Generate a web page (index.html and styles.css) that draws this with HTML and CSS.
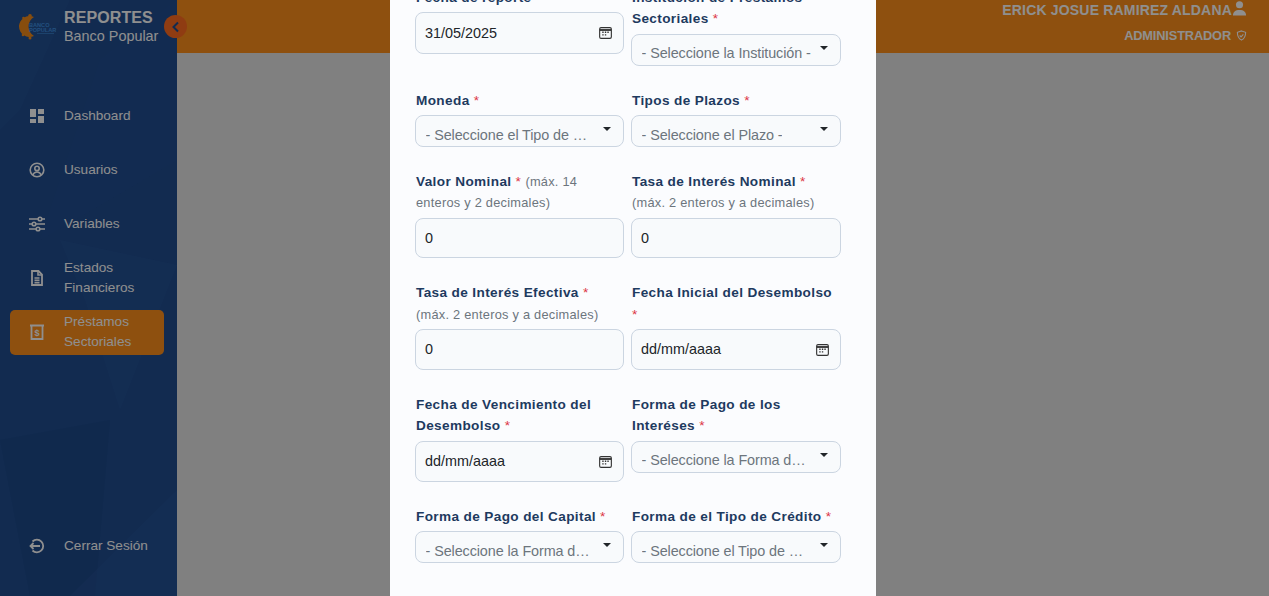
FILE: index.html
```html
<!DOCTYPE html>
<html lang="es">
<head>
  <meta charset="UTF-8" />
  <title>Reportes - Préstamos Sectoriales</title>
  <link rel="stylesheet" href="styles.css">
</head>
<body>
  <aside class="sidebar">
    <svg class="facets" viewBox="0 0 177 596" preserveAspectRatio="none" aria-hidden="true">
      <polygon points="0,0 70,0 20,110 0,130" fill="#3a6ab3" opacity=".1"/>
      <polygon points="60,240 177,265 120,410 85,300" fill="#3a6ab3" opacity=".14"/>
      <polygon points="0,440 110,420 95,596 30,596" fill="#17407d" opacity=".25"/>
      <polygon points="177,490 70,596 177,596" fill="#3a6ab3" opacity=".16"/>
      <polygon points="100,60 177,0 177,160 40,240" fill="#3a6ab3" opacity=".07"/>
    </svg>

    <div class="brand">
      <svg class="logo" viewBox="0 0 38 26" aria-hidden="true">
        <path d="M15 3A10.500 10.500 0 1 0 15 22A11 11 0 0 1 15 3z" fill="#f08a1a"/>
        <circle cx="11" cy="1.800" r="1.800" fill="#f08a1a"/>
        <circle cx="4.500" cy="4" r="1.300" fill="#f08a1a"/>
        <circle cx="1.300" cy="12" r="1.300" fill="#f08a1a"/>
        <circle cx="4" cy="21" r="1.300" fill="#f08a1a"/>
        <circle cx="11" cy="24" r="1.500" fill="#f08a1a"/>
        <text x="10" y="13" class="logo-text">BANCO</text>
        <text x="10" y="17.500" class="logo-text">POPULAR</text>
        <rect x="18" y="19" width="17" height="1" fill="#3f8fe0" opacity=".6"/>
      </svg>
      <div class="brand-text">
        <strong>REPORTES</strong>
        <span>Banco Popular</span>
      </div>
    </div>

    <nav class="menu">
      <a class="menu-item">
        <svg viewBox="0 0 16 16" aria-hidden="true"><path class="solid" d="M1 1h6v8H1zM9 1h6v5H9zM1 11h6v4H1zM9 8h6v7H9z"/></svg>
        <span>Dashboard</span>
      </a>
      <a class="menu-item">
        <svg viewBox="0 0 16 16" aria-hidden="true"><circle class="line" cx="8" cy="8" r="6.800"/><circle class="line" cx="8" cy="6.400" r="2.200"/><path class="line" d="M3.800 13c.8-2 2.400-3 4.200-3s3.400 1 4.200 3"/></svg>
        <span>Usuarios</span>
      </a>
      <a class="menu-item">
        <svg viewBox="0 0 16 16" aria-hidden="true"><path class="line" d="M0 3h9M13 3h3M0 8h3M7 8h9M0 13h7M11 13h5"/><circle class="line" cx="11" cy="3" r="1.800"/><circle class="line" cx="5" cy="8" r="1.800"/><circle class="line" cx="9" cy="13" r="1.800"/></svg>
        <span>Variables</span>
      </a>
      <a class="menu-item">
        <svg viewBox="0 0 16 16" aria-hidden="true"><path class="line thick" d="M3 1h6.500L13 4.500V15H3z"/><path class="line" d="M9 1v4h4M5.500 8h5M5.500 10.300h5M5.500 12.600h5"/></svg>
        <span>Estados<br>Financieros</span>
      </a>
      <a class="menu-item active">
        <svg viewBox="0 0 16 16" aria-hidden="true"><path class="line thick" d="M1 1.500h14M2.500 2v13h11V2"/><text x="8" y="12" class="dollar">$</text></svg>
        <span>Préstamos<br>Sectoriales</span>
      </a>
    </nav>

    <a class="menu-item logout">
      <svg viewBox="0 0 16 16" aria-hidden="true"><path class="line thick" d="M3.500 3.500A6.300 6.300 0 1 1 3.500 12.500"/><path class="line thick" d="M11 8H1.500M4.500 5L1.500 8l3 3"/></svg>
      <span>Cerrar Sesión</span>
    </a>
  </aside>

  <button class="toggle" aria-label="Contraer menú">
    <svg viewBox="0 0 10 12" aria-hidden="true"><path d="M7 1.500L2.500 6 7 10.500"/></svg>
  </button>

  <main class="content">
    <header class="topbar">
      <div class="user-line">
        <span>ERICK JOSUE RAMIREZ ALDANA</span>
        <svg class="user-icon" viewBox="0 0 16 16" aria-hidden="true"><circle cx="8" cy="4" r="3.800"/><path d="M1 15.500c0-4 2.500-6 7-6s7 2 7 6z"/></svg>
      </div>
      <div class="role-line">
        <span>ADMINISTRADOR</span>
        <svg class="shield-icon" viewBox="0 0 12 12" aria-hidden="true"><path d="M6 1l4.500 1.500c0 4-1 6.800-4.500 8.500C2.500 9.300 1.500 6.500 1.500 2.500z"/><path d="M4 6l1.500 1.500L8 4.800"/></svg>
      </div>
    </header>
  </main>

  <div class="backdrop"></div>

  <section class="modal" role="dialog" aria-label="Préstamos sectoriales">
    <form class="form-grid">
      <div class="field">
        <label>Fecha de reporte <em>*</em></label>
        <div class="control tall">
          <span class="value">31/05/2025</span>
          <svg class="calendar" viewBox="0 0 14 14" aria-hidden="true"><rect x=".7" y="1.700" width="12.600" height="11.600" rx="1.500"/><path d="M1 4.300h12" class="band"/><path d="M3.500 6.800h1.500M6.300 6.800h1.500M9 6.800h1.500M3.500 9.500h1.500M6.300 9.500h1.500" class="dots"/></svg>
        </div>
      </div>
      <div class="field">
        <label>Institución de Préstamos Sectoriales <em>*</em></label>
        <div class="control select"><span class="placeholder">- Seleccione la Institución -</span></div>
      </div>

      <div class="field">
        <label>Moneda <em>*</em></label>
        <div class="control select"><span class="placeholder">- Seleccione el Tipo de Moneda -</span></div>
      </div>
      <div class="field">
        <label>Tipos de Plazos <em>*</em></label>
        <div class="control select"><span class="placeholder">- Seleccione el Plazo -</span></div>
      </div>

      <div class="field">
        <label>Valor Nominal <em>*</em> <small>(máx. 14 enteros y 2 decimales)</small></label>
        <div class="control"><span class="value">0</span></div>
      </div>
      <div class="field">
        <label>Tasa de Interés Nominal <em>*</em> <small>(máx. 2 enteros y a decimales)</small></label>
        <div class="control"><span class="value">0</span></div>
      </div>

      <div class="field">
        <label>Tasa de Interés Efectiva <em>*</em> <small>(máx. 2 enteros y a decimales)</small></label>
        <div class="control"><span class="value">0</span></div>
      </div>
      <div class="field">
        <label>Fecha Inicial del Desembolso <em>*</em></label>
        <div class="control">
          <span class="value">dd/mm/aaaa</span>
          <svg class="calendar" viewBox="0 0 14 14" aria-hidden="true"><rect x=".7" y="1.700" width="12.600" height="11.600" rx="1.500"/><path d="M1 4.300h12" class="band"/><path d="M3.500 6.800h1.500M6.300 6.800h1.500M9 6.800h1.500M3.500 9.500h1.500M6.300 9.500h1.500" class="dots"/></svg>
        </div>
      </div>

      <div class="field">
        <label>Fecha de Vencimiento del Desembolso <em>*</em></label>
        <div class="control tall">
          <span class="value">dd/mm/aaaa</span>
          <svg class="calendar" viewBox="0 0 14 14" aria-hidden="true"><rect x=".7" y="1.700" width="12.600" height="11.600" rx="1.500"/><path d="M1 4.300h12" class="band"/><path d="M3.500 6.800h1.500M6.300 6.800h1.500M9 6.800h1.500M3.500 9.500h1.500M6.300 9.500h1.500" class="dots"/></svg>
        </div>
      </div>
      <div class="field">
        <label>Forma de Pago de los Interéses <em>*</em></label>
        <div class="control select"><span class="placeholder">- Seleccione la Forma de Pago -</span></div>
      </div>

      <div class="field">
        <label>Forma de Pago del Capital <em>*</em></label>
        <div class="control select"><span class="placeholder">- Seleccione la Forma de Pago -</span></div>
      </div>
      <div class="field">
        <label>Forma de el Tipo de Crédito <em>*</em></label>
        <div class="control select"><span class="placeholder">- Seleccione el Tipo de Crédito -</span></div>
      </div>
    </form>
  </section>
</body>
</html>
```

FILE: styles.css
```css
/* Reset */
*, *::before, *::after {
  box-sizing: border-box;
}

html, body {
  height: 100%;
}

body {
  margin: 0;
  display: flex;
  overflow: hidden;
  background: #e4e4e4;
  font-family: "Liberation Sans", Arial, sans-serif;
  color: #212529;
}

/* Sidebar */
.sidebar {
  position: relative;
  flex: 0 0 177px;
  display: flex;
  flex-direction: column;
  height: 596px;
  background: #204d8f;
  color: #fff;
  overflow: hidden;
}

.facets {
  position: absolute;
  inset: 0;
  width: 100%;
  height: 100%;
}

.brand {
  position: relative;
  display: flex;
  align-items: flex-start;
  height: 93px;
  padding: 8px 0 0 19px;
}

.logo {
  width: 38px;
  height: 26px;
  margin: 6px 7px 0 0;
  flex: none;
}

.logo-text {
  font-family: "Liberation Sans", Arial, sans-serif;
  font-size: 5.600px;
  font-weight: 700;
  fill: #3f8fe0;
}

.brand-text {
  display: flex;
  flex-direction: column;
  line-height: 19px;
}

.brand-text strong {
  font-size: 16px;
  letter-spacing: .1px;
}

.brand-text span {
  font-size: 14.4px;
}

.menu {
  position: relative;
  display: flex;
  flex-direction: column;
  gap: 9.200px;
  padding: 0 13px 0 10px;
}

.menu-item {
  position: relative;
  display: flex;
  align-items: center;
  gap: 19px;
  height: 45px;
  padding-left: 19px;
  border-radius: 5px;
  font-size: 13.6px;
  line-height: 20px;
}

.menu-item svg {
  width: 16px;
  height: 16px;
  flex: none;
}

.menu-item.active {
  background: #fe8f1b;
}

.menu-item.logout {
  margin: auto 13px 28px 10px;
}

.solid {
  fill: currentColor;
}

.line {
  fill: none;
  stroke: currentColor;
  stroke-width: 1.600;
}

.line.thick {
  stroke-width: 1.800;
}

.dollar {
  font-family: "Liberation Sans", Arial, sans-serif;
  font-size: 9px;
  font-weight: 700;
  text-anchor: middle;
  fill: currentColor;
}

.toggle {
  position: absolute;
  top: 15px;
  left: 164px;
  z-index: 2;
  display: flex;
  align-items: center;
  justify-content: center;
  width: 23px;
  height: 23px;
  padding: 0;
  border: none;
  border-radius: 50%;
  background: #ff6b20;
}

.toggle svg {
  width: 10px;
  height: 12px;
  fill: none;
  stroke: #204d8f;
  stroke-width: 2;
}

/* Main */
.content {
  flex: 1;
}

.topbar {
  display: flex;
  flex-direction: column;
  align-items: flex-end;
  justify-content: flex-start;
  height: 53px;
  padding: 0 22px 0 0;
  background: #fe8f1b;
  color: #fff;
  font-weight: 700;
}

.user-line {
  display: flex;
  align-items: center;
  height: 20px;
  font-size: 14px;
  letter-spacing: .18px;
}

.user-icon {
  width: 15px;
  height: 15px;
  fill: currentColor;
  margin-top: -3px;
}

.role-line {
  display: flex;
  align-items: center;
  gap: 5px;
  height: 30px;
  font-size: 12.8px;
  letter-spacing: -.15px;
}

.shield-icon {
  width: 11px;
  height: 11px;
  fill: none;
  stroke: currentColor;
  stroke-width: 1.200;
}

/* Modal */
.backdrop {
  position: fixed;
  inset: 0;
  z-index: 3;
  background: rgba(0, 0, 0, .44);
}

.modal {
  position: fixed;
  top: 0;
  bottom: 0;
  left: 390px;
  z-index: 4;
  width: 486px;
  padding: 0 35px 0 25px;
  background: #fbfcfe;
  overflow: hidden;
}

.form-grid {
  display: grid;
  grid-template-columns: 209px 210px;
  column-gap: 7px;
  row-gap: 22.300px;
  margin-top: -14.800px;
}

.field label {
  display: block;
  margin-bottom: 4px;
  padding: 1.500px 7px 0 1px;
  font-size: 13.6px;
  font-weight: 700;
  line-height: 21.500px;
  letter-spacing: .37px;
  color: #1e3a5f;
}

.field em {
  font-style: normal;
  font-weight: 400;
  color: #dc3545;
}

.field small {
  font-size: 12.8px;
  font-weight: 400;
  letter-spacing: .25px;
  color: #6c757d;
}

.control {
  display: flex;
  align-items: center;
  justify-content: space-between;
  height: 40.600px;
  padding: 0 11px 0 9px;
  border: 1px solid #cbd5e1;
  border-radius: 8px;
  background: #f8fafc;
  font-size: 14.4px;
}

.control.tall {
  height: 41.400px;
}

.value {
  color: #212529;
}

.calendar {
  width: 13px;
  height: 13px;
  fill: none;
  stroke: #333;
  stroke-width: 1.200;
}

.calendar .band {
  stroke-width: 2;
}

.calendar .dots {
  stroke-width: 1.500;
}

.control.select {
  position: relative;
  height: 32px;
  padding: 7px 27px 0 9.600px;
}

.control.select::after {
  content: "";
  position: absolute;
  top: 11px;
  right: 12px;
  border-top: 4px solid #212529;
  border-left: 4px solid transparent;
  border-right: 4px solid transparent;
}

.placeholder {
  overflow: hidden;
  white-space: nowrap;
  text-overflow: ellipsis;
  letter-spacing: -.1px;
  color: #6c757d;
}
```
